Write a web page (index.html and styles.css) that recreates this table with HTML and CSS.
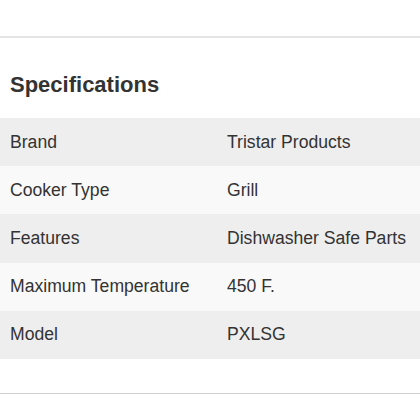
FILE: index.html
```html
<!DOCTYPE html>
<html>
<head>
<meta charset="utf-8">
<link rel="stylesheet" href="styles.css">
</head>
<body>
<div class="page">
  <hr class="rule top">
  <section class="specs">
    <h2 class="title">Specifications</h2>
    <div class="table">
      <div class="row"><div class="k">Brand</div><div class="v">Tristar Products</div></div>
      <div class="row"><div class="k">Cooker Type</div><div class="v">Grill</div></div>
      <div class="row"><div class="k">Features</div><div class="v">Dishwasher Safe Parts</div></div>
      <div class="row"><div class="k">Maximum Temperature</div><div class="v">450 F.</div></div>
      <div class="row"><div class="k">Model</div><div class="v">PXLSG</div></div>
    </div>
  </section>
  <hr class="rule bottom">
</div>
</body>
</html>
```
FILE: styles.css
```css
html, body {
  margin: 0;
  padding: 0;
  background: #fff;
}
body {
  font-family: "Liberation Sans", Arial, sans-serif;
  color: #333;
}
.page {
  padding-top: 36px;
}
.rule {
  margin: 0;
  border: 0;
  height: 2px;
  background: #e4e4e4;
}
.rule.bottom {
  height: 1px;
  background: #cfcfcf;
}
.specs {
  padding-bottom: 34px;
}
.title {
  margin: 0;
  padding: 34px 10px 0;
  height: 46px;
  font-size: 22px;
  line-height: 26px;
  font-weight: bold;
  color: #333;
}
.table {
  display: flex;
  flex-direction: column;
}
.row {
  display: grid;
  grid-template-columns: 217px 1fr;
  height: 48.2px;
  align-items: center;
  font-size: 17.6px;
  padding-left: 10px;
}
.row:nth-child(odd) { background: #eeeeee; }
.row:nth-child(even) { background: #f9f9f9; }
```
